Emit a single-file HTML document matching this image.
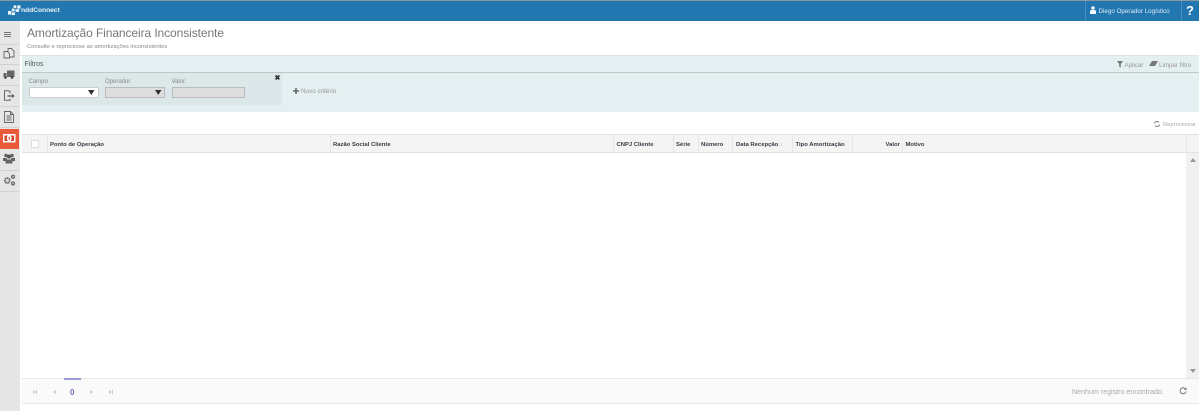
<!DOCTYPE html>
<html><head><meta charset="utf-8"><style>
html,body{margin:0;padding:0;width:1199px;height:411px;overflow:hidden;background:#fff;font-family:"Liberation Sans",sans-serif}
div,span{position:absolute;white-space:nowrap}
svg{position:absolute}
.th{top:140.500px;font-size:5.900px;font-weight:bold;color:#3a3a48;line-height:9px}
.sep{top:135px;width:1px;height:17px;background:#e6e6e6}
.lb{top:77.500px;font-size:6px;color:#888;line-height:8px}
.nav{left:0;width:19px;height:1px;background:#d2d2d2}
</style></head><body>
<div style="left:0;top:0;width:1199px;height:1px;background:#8c979e"></div>
<div style="left:0;top:1px;width:1199px;height:20px;background:#2277b0"></div>
<svg style="left:8px;top:5px" width="13" height="11" viewBox="0 0 14 11"><path fill="#e8f2f8" d="M6 0h3v3H6zM10 0h3.500v3.500H10zM4 3.500h3v3H4zM8 4h4v3H8zM0 6h3.500v4H0zM4 7.500h3.500V10.500H4z"/></svg>
<div style="left:21px;top:5.500px;font-size:6.800px;font-weight:bold;color:#e8f2f8;line-height:10px;letter-spacing:-.1px">nddConnect</div>
<div style="left:1085px;top:1px;width:1px;height:20px;background:#4b8fbe"></div>
<div style="left:1181px;top:1px;width:1px;height:20px;background:#4b8fbe"></div>
<svg style="left:1090px;top:6px" width="6" height="8" viewBox="0 0 6 8"><circle cx="3" cy="2" r="1.800" fill="#f2f7fb"/><path fill="#f2f7fb" d="M0 8V5.500Q0 4 1.500 4h3Q6 4 6 5.500V8z"/></svg>
<div style="left:1098.500px;top:6.500px;font-size:6.250px;color:#dfecf5;line-height:9px">Diego Operador Logístico</div>
<div style="left:1186px;top:2px;font-size:13px;font-weight:bold;color:#fff;line-height:18px">?</div>

<div style="left:0;top:21px;width:20px;height:390px;background:#e6e6e6"></div>
<div class="nav" style="top:44px"></div><div class="nav" style="top:64px"></div><div class="nav" style="top:85px"></div><div class="nav" style="top:106px"></div><div class="nav" style="top:127px"></div><div class="nav" style="top:170px"></div><div class="nav" style="top:191px"></div>
<svg style="left:4px;top:32px" width="8" height="6"><path stroke="#777" stroke-width="1" d="M0 .5h7M0 2.500h7M0 4.500h7"/></svg>
<svg style="left:3px;top:47px" width="12" height="12" viewBox="0 0 12 12" fill="none" stroke="#666" stroke-width=".9"><path d="M5 1.500h3.500l2.500 2.500v6H6.500V7L4.500 4.500H5zM1 4.500h3.500l2 2.500v4H1z"/></svg>
<svg style="left:3px;top:70px" width="12" height="9" viewBox="0 0 12 9"><path fill="#666" d="M4 .5h7.500V7H4zM.5 3H3.500V7H.5z"/><circle cx="2.500" cy="7.500" r="1.300" fill="#444"/><circle cx="9" cy="7.500" r="1.300" fill="#444"/></svg>
<svg style="left:3px;top:90px" width="12" height="12" viewBox="0 0 12 12" fill="none" stroke="#666" stroke-width="1"><path d="M7 3.500V1.500L5.500 .8H1.500v9.500h5.500V8.500"/><path d="M4.500 6h5.500" stroke-width="1.500"/><path fill="#666" stroke="none" d="M9 3.800 11.800 6 9 8.200z"/></svg>
<svg style="left:4px;top:111px" width="10" height="12" viewBox="0 0 10 12" fill="none" stroke="#666" stroke-width=".9"><path d="M.5.500H6.500L9.500 3.500V11.500H.5z"/><path d="M6.500.500v3h3M2.500 5h5M2.500 7h5M2.500 9h5"/></svg>
<div style="left:0;top:129px;width:19px;height:20px;background:#e9593a"></div>
<svg style="left:3px;top:134px" width="13" height="9" viewBox="0 0 13 9"><rect width="12.500" height="8.500" rx=".5" fill="#fff"/><rect x="1.500" y="1.500" width="9.500" height="5.500" fill="#d8402a"/><ellipse cx="6.250" cy="4.250" rx="2.400" ry="3.300" fill="#fff"/><rect x="5.700" y="2.700" width="1.100" height="3.100" fill="#d8402a"/></svg>
<svg style="left:3px;top:153px" width="12" height="11" viewBox="0 0 12 11"><circle cx="3" cy="2.500" r="1.800" fill="#666"/><circle cx="9" cy="2.500" r="1.800" fill="#666"/><circle cx="6" cy="3.500" r="2" fill="#555"/><path fill="#666" d="M0 5h4v3H0zM8 5h4v3H8zM2.500 6.500h7v4h-7z"/></svg>
<svg style="left:3px;top:174px" width="13" height="12" viewBox="0 0 13 12" fill="none" stroke="#666"><circle cx="4.300" cy="6.500" r="2.400" stroke-width="2" stroke-dasharray="1.500 .6"/><circle cx="10" cy="2.800" r="1.400" stroke-width="1.300"/><circle cx="10" cy="9.500" r="1.400" stroke-width="1.300"/></svg>

<div style="left:27px;top:24.500px;font-size:12px;color:#777;line-height:16px;letter-spacing:-.09px">Amortização Financeira Inconsistente</div>
<div style="left:27px;top:43px;font-size:5.800px;color:#888;line-height:9px">Consulte e reprocesse as amortizações inconsistentes</div>

<div style="left:22px;top:55px;width:1177px;height:57px;background:#e4eff1"></div>
<div style="left:20px;top:55px;width:1179px;height:1px;background:#dfe5e6"></div>
<div style="left:22px;top:72px;width:1177px;height:1px;background:#bcc7c8"></div>
<div style="left:24.500px;top:60px;font-size:7px;color:#555;line-height:9px">Filtros</div>
<svg style="left:1117px;top:61px" width="6" height="7"><path fill="#777" d="M0 0h6L3.800 3v3.500L2.200 5.500V3z"/></svg>
<div style="left:1124.500px;top:60.500px;font-size:6.200px;color:#999;line-height:9px">Aplicar</div>
<svg style="left:1149px;top:61px" width="9" height="6"><path fill="#777" d="M3 0h6L6 5H0z"/></svg>
<div style="left:1159px;top:60.500px;font-size:6.200px;color:#999;line-height:9px">Limpar filtro</div>

<div style="left:22px;top:73px;width:260px;height:32px;background:#dce7e9"></div>
<div style="left:274.500px;top:75px;font-size:7px;font-weight:bold;color:#333;line-height:7px">✖</div>
<div class="lb" style="left:28.500px">Campo</div><div class="lb" style="left:105px">Operador</div><div class="lb" style="left:171.500px">Valor</div>
<div style="left:28.500px;top:87px;width:68px;height:9px;background:#fff;border:1px solid #ccc;border-radius:2px"></div>
<div style="left:105px;top:87px;width:58px;height:9px;background:#ddd;border:1px solid #bbb"></div>
<div style="left:171.500px;top:87px;width:71px;height:9px;background:#ddd;border:1px solid #bbb"></div>
<svg style="left:88px;top:90px" width="7" height="5"><path fill="#333" d="M0 0h6.500L3.250 5z"/></svg>
<svg style="left:155px;top:90px" width="7" height="5"><path fill="#333" d="M0 0h6.500L3.250 5z"/></svg>
<svg style="left:293px;top:88px" width="6" height="6"><path stroke="#666" stroke-width="1.600" d="M3 0v6M0 3h6"/></svg>
<div style="left:301px;top:87px;font-size:6.300px;color:#999;line-height:9px">Novo critério</div>

<svg style="left:1154px;top:121px" width="6" height="6" viewBox="0 0 6 6" fill="none" stroke="#777" stroke-width=".9"><path d="M.5 2.500A2.500 2.500 0 0 1 5 1.500M5.500 3.500A2.500 2.500 0 0 1 1 4.500"/></svg>
<div style="left:1163px;top:120.500px;font-size:5.800px;color:#aaa;line-height:9px">Reprocessar</div>

<div style="left:22px;top:134px;width:1177px;height:18px;background:#f4f4f4"></div>
<div style="left:22px;top:134px;width:1177px;height:1px;background:#e3e3e3"></div>
<div style="left:22px;top:152px;width:1177px;height:1px;background:#e3e3e3"></div>
<div style="left:31px;top:140px;width:6px;height:6px;background:#fff;border:1px solid #ddd"></div>
<div class="sep" style="left:47px"></div><div class="sep" style="left:330px"></div><div class="sep" style="left:613px"></div><div class="sep" style="left:673px"></div><div class="sep" style="left:698px"></div><div class="sep" style="left:732px"></div><div class="sep" style="left:792px"></div><div class="sep" style="left:852px"></div><div class="sep" style="left:902px"></div><div class="sep" style="left:1186px"></div>
<div class="th" style="left:50px">Ponto de Operação</div>
<div class="th" style="left:333px">Razão Social Cliente</div>
<div class="th" style="left:616.500px">CNPJ Cliente</div>
<div class="th" style="left:676px">Série</div>
<div class="th" style="left:701px">Número</div>
<div class="th" style="left:736px">Data Recepção</div>
<div class="th" style="left:780px;font-weight:normal;color:#999">↓</div>
<div class="th" style="left:795.500px">Tipo Amortização</div>
<div class="th" style="left:885.500px">Valor</div>
<div class="th" style="left:905.500px">Motivo</div>

<div style="left:1186px;top:153px;width:13px;height:225px;background:#f1f1f1"></div>
<svg style="left:1190px;top:158px" width="6" height="4"><path fill="#999" d="M0 4 3 0l3 4z"/></svg>
<svg style="left:1190px;top:369px" width="6" height="4"><path fill="#999" d="M0 0h6L3 4z"/></svg>

<div style="left:22px;top:378px;width:1177px;height:25px;background:#fafafa"></div>
<div style="left:22px;top:378px;width:1177px;height:1px;background:#e8e8e8"></div>
<div style="left:22px;top:403px;width:1177px;height:1px;background:#e8e8e8"></div>
<div style="left:64px;top:378px;width:17px;height:1.500px;background:#9a9ad8"></div>
<svg style="left:31px;top:389px" width="85" height="6" fill="#ccc"><path d="M2 1v4h1V1zM3 3l3-2v4zM22 3l3-2v4zM59 1l3 2-3 2zM78 1l3 2-3 2zM81 1h1v4h-1z"/></svg>
<div style="left:70px;top:387.500px;font-size:8px;font-weight:bold;color:#6a6ab8;line-height:9px">0</div>
<div style="left:1072px;top:387.500px;font-size:7.100px;color:#aaa;line-height:9px">Nenhum registro encontrado.</div>
<svg style="left:1179px;top:387px" width="8" height="8" viewBox="0 0 8 8" fill="none" stroke="#777" stroke-width="1"><path d="M6.500 2A3 3 0 1 0 7 4.500"/><path fill="#777" stroke="none" d="M7.500 .3V3H5z"/></svg>
</body></html>
